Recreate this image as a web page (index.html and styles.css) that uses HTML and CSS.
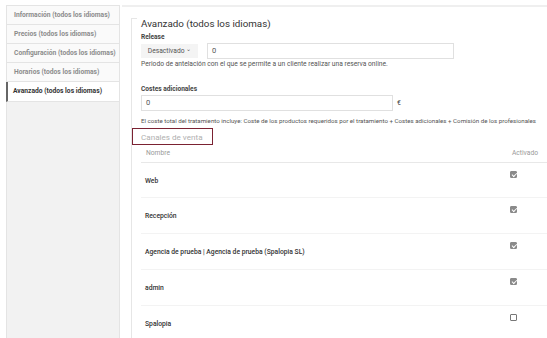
FILE: index.html
```html
<!DOCTYPE html>
<html lang="es">
<head>
    <meta charset="UTF-8">
    <meta name="viewport" content="width=device-width, initial-scale=1.0">
    <title>Avanzado</title>
    <link rel="stylesheet" href="styles.css">
</head>
<body>
    <div class="page">
        <div class="sidebar">
            <div class="tab">Información (todos los idiomas)</div>
            <div class="tab">Precios (todos los idiomas)</div>
            <div class="tab">Configuración (todos los idiomas)</div>
            <div class="tab">Horarios (todos los idiomas)</div>
            <div class="tab active">Avanzado (todos los idiomas)</div>
        </div>
        <div class="main">
            <div class="panel">
                <h2 class="title">Avanzado (todos los idiomas)</h2>

                <div class="label">Release</div>
                <div class="field-row">
                    <div class="select">Desactivado <span class="caret">&#8964;</span></div>
                    <div class="input wide">0</div>
                </div>
                <div class="help">Periodo de antelación con el que se permite a un cliente realizar una reserva online.</div>

                <div class="label costes">Costes adicionales</div>
                <div class="field-row">
                    <div class="input medium">0</div>
                    <span class="unit">€</span>
                </div>
                <div class="help second">El coste total del tratamiento incluye: Coste de los productos requeridos por el tratamiento + Costes adicionales + Comisión de los profesionales</div>

                <div class="section">Canales de venta</div>
                <div class="highlight"></div>

                <div class="table">
                    <div class="thead">
                        <span>Nombre</span>
                        <span>Activado</span>
                    </div>
                    <div class="trow first"><span class="name">Web</span><span class="check on"></span></div>
                    <div class="trow"><span class="name">Recepción</span><span class="check on"></span></div>
                    <div class="trow"><span class="name">Agencia de prueba | Agencia de prueba (Spalopia SL)</span><span class="check on"></span></div>
                    <div class="trow"><span class="name">admin</span><span class="check on"></span></div>
                    <div class="trow"><span class="name">Spalopia</span><span class="check"></span></div>
                </div>
            </div>
        </div>
    </div>
</body>
</html>
```

FILE: styles.css
```css
body {
    margin: 0;
    background-color: #ffffff;
    font-family: Roboto, "Liberation Sans", Arial, sans-serif;
    color: #333;
    overflow: hidden;
}
.page {
    display: flex;
    padding-top: 5px;
    height: 333px;
}
.sidebar {
    margin-left: 6px;
    width: 112px;
    flex-shrink: 0;
    background-color: #f2f2f2;
    border: 1px solid #e4e4e4;
    border-bottom: none;
}
.tab {
    height: 18px;
    line-height: 18px;
    padding-left: 7px;
    background-color: #fafafa;
    border-bottom: 1px solid #e4e4e4;
    font-size: 6.7px;
    font-weight: 700;
    color: #8c8c8c;
    white-space: nowrap;
}
.tab.active {
    height: 19px;
    line-height: 19px;
    padding-left: 5px;
    border-left: 2px solid #666;
    margin-left: -1px;
    background-color: #ffffff;
    color: #333;
}
.main {
    flex: 1;
    min-width: 0;
    overflow: hidden;
    margin-left: 2px;
    border-top: 2px solid #efefef;
    padding: 13px 0 0 9px;
}
.panel {
    position: relative;
    height: 320px;
    border-left: 1px solid #e6e6e6;
    padding-left: 9px;
}
.panel::before {
    content: "";
    position: absolute;
    left: 0;
    top: 0;
    width: 5px;
    border-top: 1px solid #e6e6e6;
}
.title {
    margin: -2px 0 0 0;
    font-size: 9.8px;
    line-height: 12px;
    font-weight: 400;
    color: #333;
}
.label {
    margin-top: 2px;
    font-size: 6.6px;
    font-weight: 700;
    color: #444;
    line-height: 10px;
}
.label.costes {
    margin-top: 15px;
}
.field-row {
    display: flex;
    align-items: center;
    gap: 9px;
    margin-top: 1px;
}
.select {
    width: 57px;
    height: 14px;
    line-height: 14px;
    background-color: #f4f4f4;
    text-align: center;
    font-size: 6.7px;
    color: #555;
}
.caret {
    font-size: 6px;
    position: relative;
    top: -2px;
}
.input {
    height: 14px;
    line-height: 14px;
    border: 1px solid #e0e0e0;
    padding-left: 4px;
    font-size: 7.5px;
    color: #555;
    box-sizing: content-box;
}
.input.wide {
    width: 241px;
}
.input.medium {
    width: 246px;
}
.unit {
    font-size: 7px;
    color: #444;
    margin-left: -5px;
}
.help {
    margin-top: 1px;
    font-size: 6.7px;
    line-height: 9px;
    color: #555;
    white-space: nowrap;
}
.help.second {
    margin-top: 6px;
    font-size: 6.18px;
}
.section {
    margin-top: 4px;
    height: 17px;
    line-height: 14px;
    font-size: 8.1px;
    color: #b0b0b0;
}
.highlight {
    position: absolute;
    left: 0;
    top: 110px;
    width: 79px;
    height: 15px;
    border: 1.5px solid #7b2232;
}
.thead {
    display: flex;
    justify-content: space-between;
    height: 15px;
    line-height: 12px;
    padding: 0 9px 0 5px;
    border-bottom: 1px solid #e8e8e8;
    font-size: 6.7px;
    color: #9a9a9a;
}
.trow {
    display: flex;
    justify-content: space-between;
    height: 35px;
    padding: 0 30px 0 4px;
    border-bottom: 1px solid #f3f3f3;
    font-size: 6.75px;
    font-weight: 500;
    color: #333;
}
.trow.first {
    height: 34px;
}
.trow .name {
    margin-top: 14px;
    line-height: 9px;
}
.check {
    width: 7px;
    height: 7px;
    margin-top: 8px;
    border: 1px solid #777;
    border-radius: 1px;
    background-color: #fff;
    position: relative;
    box-sizing: border-box;
}
.check.on {
    background-color: #8a8a8a;
    border-color: #8a8a8a;
}
.check.on::after {
    content: "";
    position: absolute;
    left: 1px;
    top: 0.5px;
    width: 3.5px;
    height: 2px;
    border-left: 1.2px solid #fff;
    border-bottom: 1.2px solid #fff;
    transform: rotate(-45deg);
}
```
